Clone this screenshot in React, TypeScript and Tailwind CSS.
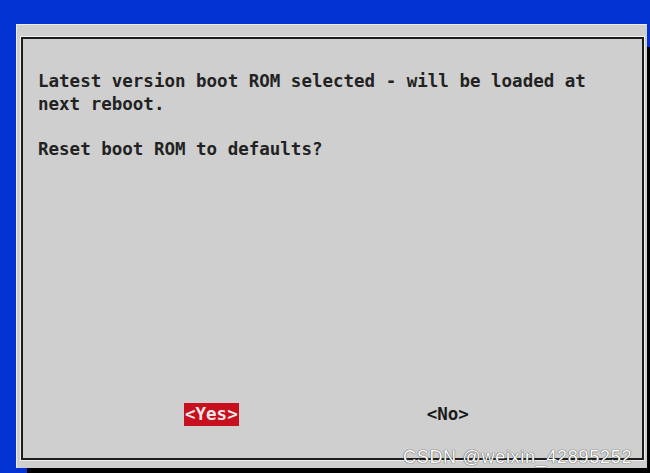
/**
 * Raspberry Pi raspi-config style dialog
 * Blue console background, grey whiptail box, Yes / No buttons
 */

export default function App() {
  const message = [
    'Latest version boot ROM selected - will be loaded at',
    'next reboot.',
    '',
    'Reset boot ROM to defaults?',
  ];

  return (
    <div className="relative w-[650px] h-[473px] overflow-hidden bg-[#0433d4] pt-[24px] pl-[16px]">
      {/* Dialog panel with hard black shadow */}
      <div className="flex h-[444px] w-[631px] flex-col bg-[#cfcfcf] pl-[4px] pt-[12px] pr-[3px] pb-[8px] border-t border-l border-[#ececec] shadow-[11px_23px_0_0_#000]">
        {/* Inner frame */}
        <div className="flex flex-1 flex-col border-2 border-[#1d1d1d] outline outline-1 outline-[#ededed] pl-[15px] pt-[31px] pb-[32px] font-['DejaVu_Sans_Mono',monospace] text-[17.5px] leading-[22.5px] font-bold text-[#222]">
          {/* Message */}
          <div>
            {message.map((line, i) => (
              <div key={i} className="h-[22.5px] whitespace-pre">
                {line}
              </div>
            ))}
          </div>

          <div className="flex-1" />

          {/* Buttons */}
          <div className="flex items-center pl-[146px]">
            <span className="bg-[#c70f1d] px-[1px] leading-[23px] text-[#e6e6e6]">&lt;Yes&gt;</span>
            <span className="ml-[188px] leading-[23px] text-[#1a1a1a]">&lt;No&gt;</span>
          </div>
        </div>
      </div>

      {/* Watermark */}
      <div className="absolute left-[403px] top-[444px] font-['Liberation_Sans',sans-serif] text-[18px] tracking-[0.7px] text-white [text-shadow:0_0_1px_#444,0_0_1px_#444]">
        CSDN @weixin_42895252
      </div>
    </div>
  );
}
